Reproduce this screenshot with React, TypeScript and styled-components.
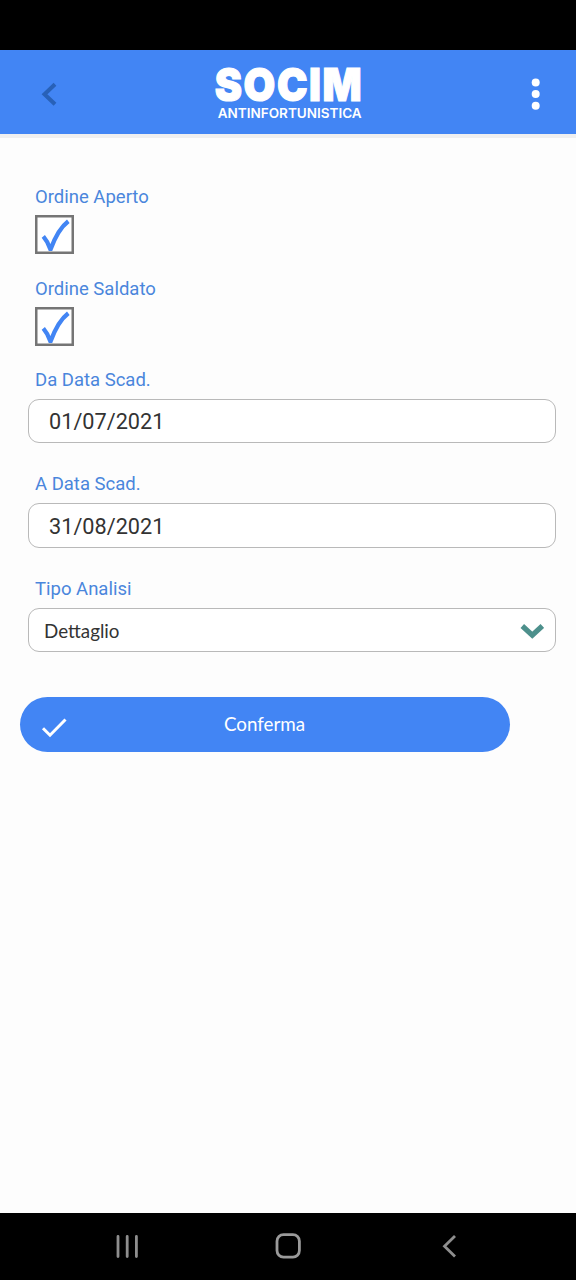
import React from 'react';
import styled, { createGlobalStyle } from 'styled-components';

const blue = '#4285f4';

const GlobalStyle = createGlobalStyle`
  * { box-sizing: border-box; }
  body { margin: 0; background: #fdfdfd; font-family: Roboto, sans-serif; }
`;

const Screen = styled.div`
  display: flex;
  flex-direction: column;
  width: 576px;
  height: 1280px;
  background: #fdfdfd;
`;

const StatusBar = styled.div`
  flex: none;
  height: 50px;
  background: #000;
`;

const Header = styled.header`
  flex: none;
  display: flex;
  align-items: center;
  justify-content: space-between;
  height: 88px;
  padding: 4px 29px 0 37px;
  background: ${blue};
  border-bottom: 4px solid #efeff0;
`;

const IconButton = styled.button`
  display: flex;
  padding: 0;
  border: 0;
  background: none;
`;

const Logo = styled.svg`
  display: block;
  margin-right: 7px;
  overflow: visible;
  fill: #fff;
  font-family: Inter, sans-serif;
`;

const Form = styled.main`
  flex: 1;
  display: flex;
  flex-direction: column;
  padding: 47px 20px 0 28px;
`;

const Field = styled.div<{ $gap: number; $inner?: number }>`
  display: flex;
  flex-direction: column;
  gap: ${(p) => p.$inner ?? 7}px;
  margin-bottom: ${(p) => p.$gap}px;
`;

const Label = styled.label`
  height: 24px;
  padding-left: 7px;
  font-size: 18.5px;
  line-height: 24px;
  color: #4a86dc;
`;

const CheckBox = styled.div`
  width: 39px;
  height: 39px;
  margin-left: 7px;
  border: 2px solid #757575;
  box-shadow: inset 0 0 0 0.5px #757575;
  background: #fff;
`;

const InputBox = styled.div<{ $select?: boolean; $height?: number }>`
  display: flex;
  align-items: center;
  justify-content: space-between;
  height: ${(p) => p.$height ?? 44}px;
  padding: ${(p) => (p.$select ? '1px 11px 0 15px' : '1px 20px 0')};
  border: 1px solid #b9b9b9;
  border-radius: 11px;
  background: #fff;
  color: #333;
  font-family: ${(p) => (p.$select ? 'Lato' : 'Roboto')}, sans-serif;
  font-size: ${(p) => (p.$select ? 18.8 : 21.7)}px;
`;

const ConfirmButton = styled.button`
  display: grid;
  grid-template-columns: 28px 1fr 28px;
  align-items: center;
  width: 490px;
  height: 55px;
  margin-left: -8px;
  padding: 0 21px 2px 20px;
  border: 0;
  border-radius: 28px;
  background: ${blue};
  color: #fff;
  font-family: Lato, sans-serif;
  font-size: 18.8px;
`;

const ConfirmIcon = styled.svg`
  margin-top: 8px;
`;

const NavBar = styled.nav`
  flex: none;
  display: flex;
  justify-content: space-between;
  align-items: center;
  height: 67px;
  padding: 0 112px 2px;
  background: #000;
`;

const Tick = () => (
  <svg width="34" height="34" viewBox="0 0 34 34" fill="none" stroke={blue} strokeWidth="4.300">
    <path d="M6.300 19.400C9 22.500 11.500 26.500 13.500 32.500C17.500 21.500 23 10.500 31.300 4.200" />
  </svg>
);

const CheckField = ({ label, gap }: { label: string; gap: number }) => (
  <Field $gap={gap} $inner={6}>
    <Label>{label}</Label>
    <CheckBox role="checkbox" aria-checked="true" aria-label={label}>
      <Tick />
    </CheckBox>
  </Field>
);

export default function App() {
  return (
    <Screen>
      <GlobalStyle />
      <StatusBar />
      <Header>
        <IconButton aria-label="Indietro">
          <svg width="24" height="24" viewBox="0 0 24 24" fill="none" stroke="#2861b8" strokeWidth="4">
            <path d="M18 2.200L7.500 12.200L18 22.200" />
          </svg>
        </IconButton>
        <Logo width="150" height="60" viewBox="0 0 150 60">
          <text transform="translate(0.8 36.500) scale(0.89 1)" fontSize="46" fontWeight="900" stroke="#fff" strokeWidth="1.200" textLength="165" lengthAdjust="spacing">SOCIM</text>
          <text x="3.700" y="54" fontSize="13.500" fontWeight="600" textLength="144" lengthAdjust="spacingAndGlyphs">ANTINFORTUNISTICA</text>
        </Logo>
        <IconButton aria-label="Menu">
          <svg width="24" height="36" viewBox="0 0 24 36" fill="#fff">
            <circle cx="12.700" cy="6.500" r="4" />
            <circle cx="12.700" cy="18.100" r="4" />
            <circle cx="12.700" cy="29.700" r="4" />
          </svg>
        </IconButton>
      </Header>
      <Form>
        <CheckField label="Ordine Aperto" gap={23} />
        <CheckField label="Ordine Saldato" gap={22} />
        <Field $gap={29}>
          <Label>Da Data Scad.</Label>
          <InputBox>01/07/2021</InputBox>
        </Field>
        <Field $gap={29}>
          <Label>A Data Scad.</Label>
          <InputBox $height={45}>31/08/2021</InputBox>
        </Field>
        <Field $gap={45}>
          <Label>Tipo Analisi</Label>
          <InputBox $select>
            Dettaglio
            <svg width="24" height="18" viewBox="0 0 24 18" fill="none" stroke="#4d908c" strokeWidth="5.200">
              <path d="M2.300 4L12.300 13.200L22.300 4" />
            </svg>
          </InputBox>
        </Field>
        <ConfirmButton>
          <ConfirmIcon width="28" height="24" viewBox="0 0 28 24" fill="none" stroke="#fff" strokeWidth="3">
            <path d="M3 12.200L10 19.200L25.500 3.500" />
          </ConfirmIcon>
          Conferma
        </ConfirmButton>
      </Form>
      <NavBar>
        <svg width="30" height="30" viewBox="0 0 30 30" stroke="#8e8e8e" strokeWidth="2.800" strokeLinecap="round">
          <path d="M6 5.500V25.500M15.200 5.500V25.500M24.400 5.500V25.500" />
        </svg>
        <svg width="30" height="30" viewBox="0 0 30 30" fill="none" stroke="#9a9a9a" strokeWidth="2.800">
          <rect x="4" y="3.700" width="22.400" height="22.400" rx="6.500" />
        </svg>
        <svg width="30" height="30" viewBox="0 0 30 30" fill="none" stroke="#8e8e8e" strokeWidth="2.800">
          <path d="M21 5L10.500 15.300L21 25.500" />
        </svg>
      </NavBar>
    </Screen>
  );
}
